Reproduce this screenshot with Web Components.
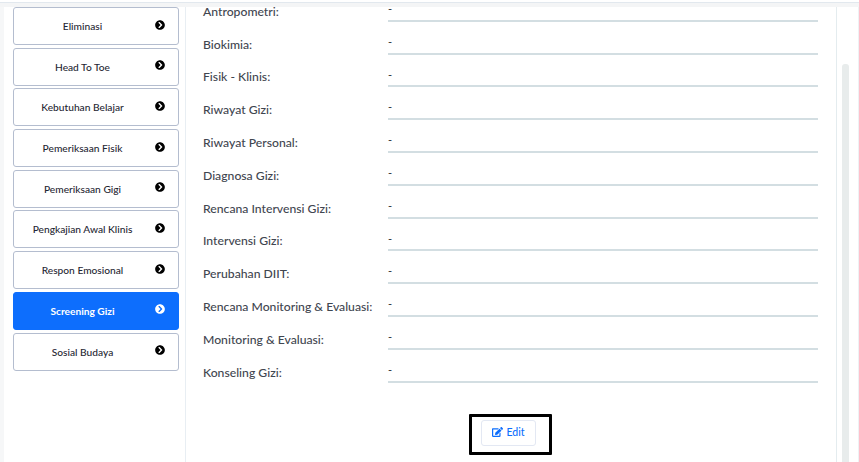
<!DOCTYPE html>
<html>
<head>
<meta charset="utf-8">
<title>Screening Gizi</title>
<style>
  html, body { margin: 0; height: 100%; overflow: hidden; background: #fff; }
  body { font-family: Lato, "Noto Sans", sans-serif; }
</style>
</head>
<body>
<gizi-page>
  <side-menu slot="menu">
    <menu-item>Eliminasi</menu-item>
    <menu-item>Head To Toe</menu-item>
    <menu-item>Kebutuhan Belajar</menu-item>
    <menu-item>Pemeriksaan Fisik</menu-item>
    <menu-item>Pemeriksaan Gigi</menu-item>
    <menu-item>Pengkajian Awal Klinis</menu-item>
    <menu-item>Respon Emosional</menu-item>
    <menu-item active>Screening Gizi</menu-item>
    <menu-item>Sosial Budaya</menu-item>
  </side-menu>
  <gizi-form slot="content">
    <form-row>Antropometri:</form-row>
    <form-row>Biokimia:</form-row>
    <form-row>Fisik - Klinis:</form-row>
    <form-row>Riwayat Gizi:</form-row>
    <form-row>Riwayat Personal:</form-row>
    <form-row>Diagnosa Gizi:</form-row>
    <form-row>Rencana Intervensi Gizi:</form-row>
    <form-row>Intervensi Gizi:</form-row>
    <form-row>Perubahan DIIT:</form-row>
    <form-row>Rencana Monitoring &amp; Evaluasi:</form-row>
    <form-row>Monitoring &amp; Evaluasi:</form-row>
    <form-row>Konseling Gizi:</form-row>
    <edit-button></edit-button>
  </gizi-form>
</gizi-page>

<script>
class GiziPage extends HTMLElement {
  constructor() {
    super();
    this.attachShadow({ mode: 'open' });
    this.shadowRoot.innerHTML = `
      <style>
        :host {
          display: grid;
          grid-template-rows: 7px 1fr;
          height: 462px;
          overflow: hidden;
        }
        .top {
          background: #f4f5f6;
          border-top: 2px solid #fff;
          box-sizing: border-box;
          box-shadow: inset 0 1px 0 #e2e8ee;
        }
        .body {
          display: grid;
          grid-template-columns: 4px 182px 651px 21px 1px;
          min-height: 0;
          overflow: hidden;
        }
        .gutter { background: #f6f7f8; }
        .left { padding: 0 6px 0 9px; border-right: 1px solid #e8eef3; }
        .main { overflow: hidden; border-right: 1px solid #e4ecef; }
        .track { padding: 57px 0 0 5px; display: flex; }
        .thumb { width: 7px; background: #e8ecec; border-radius: 3px 3px 0 0; }
        .edge { background: #eef1f4; }
      </style>
      <div class="top"></div>
      <div class="body">
        <div class="gutter"></div>
        <div class="left"><slot name="menu"></slot></div>
        <div class="main"><slot name="content"></slot></div>
        <div class="track"><div class="thumb"></div></div>
        <div class="edge"></div>
      </div>`;
  }
}

class SideMenu extends HTMLElement {
  constructor() {
    super();
    this.attachShadow({ mode: 'open' });
    this.shadowRoot.innerHTML = `
      <style>
        :host { display: flex; flex-direction: column; gap: 2.7px; }
      </style>
      <slot></slot>`;
  }
}

class MenuItem extends HTMLElement {
  constructor() {
    super();
    this.attachShadow({ mode: 'open' });
    this.shadowRoot.innerHTML = `
      <style>
        :host {
          display: grid;
          grid-template-columns: 125px 1fr;
          align-items: center;
          box-sizing: border-box;
          height: 38px;
          padding-left: 6px;
          border: 1px solid #b4bdcf;
          border-radius: 3px;
          background: #fff;
          color: #1f2733;
          font-size: 10.2px;
          font-weight: 500;
          text-align: center;
        }
        :host([active]) {
          background: #0d6efd;
          border-color: #0d6efd;
          color: #fff;
          font-weight: 700;
        }
        svg { display: block; width: 10px; height: 10px; margin: -3px 0 0 10px; color: #000; }
        :host([active]) svg { color: #fff; }
      </style>
      <span><slot></slot></span>
      <svg viewBox="0 0 512 512" fill="currentColor"><path d="M256 8c137 0 248 111 248 248S393 504 256 504 8 393 8 256 119 8 256 8zm114 231L234 103c-9-9-25-9-34 0l-17 17c-9 9-9 25 0 34l102 102-102 102c-9 9-9 25 0 34l17 17c9 9 25 9 34 0l136-136c9-9 9-25 0-34z"/></svg>`;
  }
}

class GiziForm extends HTMLElement {
  constructor() {
    super();
    this.attachShadow({ mode: 'open' });
    this.shadowRoot.innerHTML = `
      <style>
        :host { display: block; margin-top: -18px; padding: 0 18px 0 17px; }
      </style>
      <slot></slot>`;
  }
}

class FormRow extends HTMLElement {
  constructor() {
    super();
    this.attachShadow({ mode: 'open' });
    this.shadowRoot.innerHTML = `
      <style>
        :host {
          display: grid;
          grid-template-columns: 185px 430px;
          height: 32.8px;
          color: #3f4650;
          font-size: 12.2px;
          font-weight: 500;
        }
        .label { align-self: end; padding-bottom: 2px; line-height: 16px; }
        .value {
          box-sizing: border-box;
          border-bottom: 2px solid #d3dee2;
          font-size: 11px;
          line-height: 14px;
          padding-top: 13px;
          color: #3a3f46;
        }
      </style>
      <div class="label"><slot></slot></div>
      <div class="value">-</div>`;
  }
}

class EditButton extends HTMLElement {
  constructor() {
    super();
    this.attachShadow({ mode: 'open' });
    this.shadowRoot.innerHTML = `
      <style>
        :host { display: flex; justify-content: center; padding-top: 31px; }
        .frame {
          display: flex;
          justify-content: center;
          align-items: center;
          box-sizing: border-box;
          width: 83px;
          height: 41px;
          padding: 0 4px 2px 0;
          border: 3px solid #000;
          border-radius: 1px;
        }
        button {
          display: flex;
          align-items: center;
          gap: 3px;
          box-sizing: border-box;
          width: 55px;
          height: 26px;
          padding: 0 0 2px;
          justify-content: center;
          border: 1px solid #e3e8f3;
          border-radius: 3px;
          background: #fff;
          color: #0d6efd;
          font: 500 10.5px Lato, "Noto Sans", sans-serif;
        }
        svg { width: 11px; height: 10px; }
      </style>
      <div class="frame">
        <button type="button">
          <svg viewBox="0 0 576 512" fill="currentColor"><path d="M402.6 83.2l90.2 90.2c3.8 3.8 3.8 10 0 13.8L274.4 405.6l-92.8 10.3c-12.4 1.4-22.9-9.1-21.5-21.5l10.3-92.8L388.8 83.2c3.8-3.8 10-3.8 13.8 0zm162-22.9l-48.8-48.8c-15.2-15.2-39.9-15.2-55.2 0l-35.4 35.4c-3.8 3.8-3.8 10 0 13.8l90.2 90.2c3.8 3.8 10 3.8 13.8 0l35.4-35.4c15.2-15.3 15.2-40 0-55.2zM384 346.2V448H64V128h229.8c3.2 0 6.2-1.3 8.5-3.5l40-40c7.6-7.6 2.2-20.5-8.5-20.5H48C21.5 64 0 85.5 0 112v352c0 26.5 21.5 48 48 48h352c26.5 0 48-21.5 48-48V306.2c0-10.7-12.9-16-20.5-8.5l-40 40c-2.2 2.3-3.5 5.3-3.5 8.5z"/></svg>
          Edit
        </button>
      </div>`;
  }
}

customElements.define('gizi-page', GiziPage);
customElements.define('side-menu', SideMenu);
customElements.define('menu-item', MenuItem);
customElements.define('gizi-form', GiziForm);
customElements.define('form-row', FormRow);
customElements.define('edit-button', EditButton);
</script>
</body>
</html>
